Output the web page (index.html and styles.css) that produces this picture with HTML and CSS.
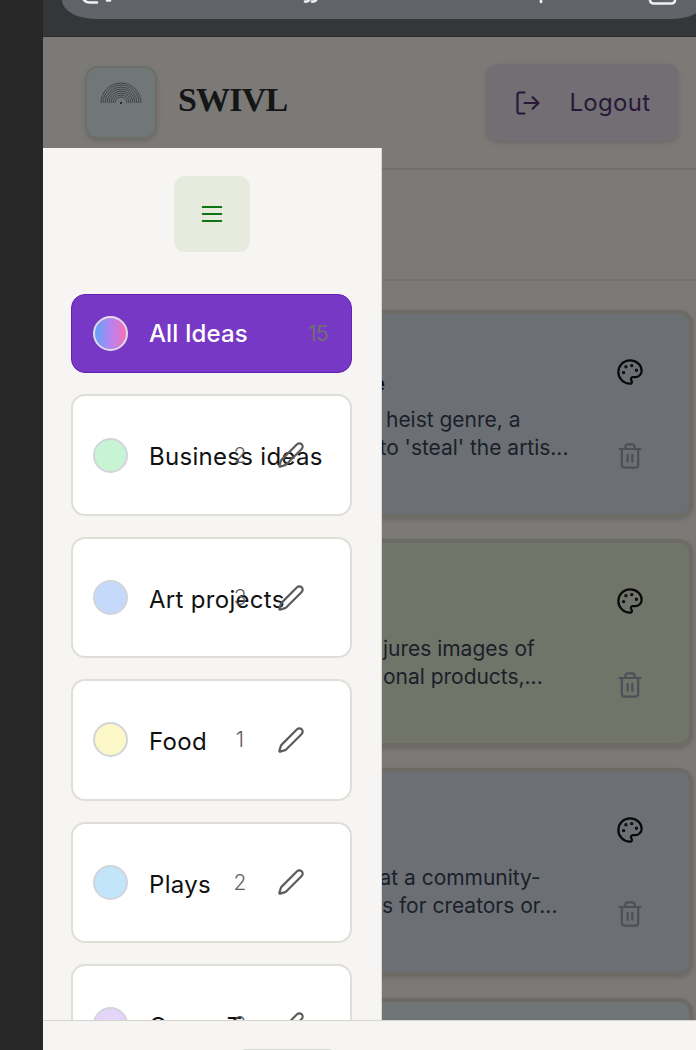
FILE: index.html
```html
<!DOCTYPE html>
<html lang="en">
<head>
<meta charset="utf-8">
<title>SWIVL</title>
<link rel="stylesheet" href="styles.css">
</head>
<body>
<svg class="defs" width="0" height="0">
  <symbol id="pencil" viewBox="0 0 24 24"><path d="M21.174 6.812a1 1 0 0 0-3.986-3.987L3.842 16.174a2 2 0 0 0-.5.83l-1.321 4.352a.5.5 0 0 0 .623.622l4.353-1.32a2 2 0 0 0 .83-.497z"/></symbol>
  <symbol id="palette" viewBox="0 0 24 24"><g fill="currentColor"><circle cx="13.5" cy="6.5" r=".5"/><circle cx="17.5" cy="10.5" r=".5"/><circle cx="8.5" cy="7.5" r=".5"/><circle cx="6.5" cy="12.5" r=".5"/></g><path d="M12 2C6.5 2 2 6.5 2 12s4.5 10 10 10c.926 0 1.648-.746 1.648-1.688 0-.437-.18-.835-.437-1.125-.29-.289-.438-.652-.438-1.125a1.64 1.64 0 0 1 1.668-1.668h1.996c3.051 0 5.555-2.503 5.555-5.554C21.965 6.012 17.461 2 12 2z"/></symbol>
  <symbol id="trash" viewBox="0 0 24 24"><path d="M3 6h18M19 6v14c0 1-1 2-2 2H7c-1 0-2-1-2-2V6M8 6V4c0-1 1-2 2-2h4c1 0 2 1 2 2v2M10 11v6M14 11v6"/></symbol>
</svg>
<div class="screen">
  <div class="bezel"></div>
  <div class="phone">
    <div class="browser">
      <div class="address">
        <svg width="636" height="20" viewBox="62 0 636 20"><path d="M84 0Q86 2.500 90 2.500H97M107 0.500h3M305 1.500q3 .5 4.500-2M312 1.500q3 .5 4.500-2M541 0v2"/><path d="M650 0q0 3.500 4 3.500h17q4 0 4-3.500"/></svg>
      </div>
    </div>
    <div class="app">
      <header class="header">
        <div class="brand">
          <div class="logo">
            <svg width="44" height="24" viewBox="-22 -22 44 24"><path d="M-20 0a20 20 0 0 1 40 0M-18 0a18 18 0 0 1 36 0M-16 0a16 16 0 0 1 32 0M-14 0a14 14 0 0 1 28 0M-12 0a12 12 0 0 1 24 0M-10 0a10 10 0 0 1 20 0M-8 0a8 8 0 0 1 16 0M-6 0a6 6 0 0 1 12 0"/><circle r="1"/></svg>
          </div>
          <span class="wordmark">SWIVL</span>
        </div>
        <div class="logout">
          <svg class="icon" viewBox="0 0 24 24"><path d="M9 21H5a2 2 0 0 1-2-2V5a2 2 0 0 1 2-2h4M16 17l5-5-5-5M21 12H9"/></svg>
          <span>Logout</span>
        </div>
      </header>
      <div class="toolbar"></div>
      <main class="ideas">
        <article class="card slate">
          <div class="copy"><h3>e</h3><p class="in-a">heist genre, a</p><p class="in-b">to 'steal' the artis...</p></div>
          <div class="tools"><svg class="icon"><use href="#palette"/></svg><svg class="icon muted"><use href="#trash"/></svg></div>
        </article>
        <article class="card olive">
          <div class="copy"><h3></h3><p class="in-c">jures images of</p><p class="in-c">onal products,...</p></div>
          <div class="tools"><svg class="icon"><use href="#palette"/></svg><svg class="icon muted"><use href="#trash"/></svg></div>
        </article>
        <article class="card slate">
          <div class="copy"><h3></h3><p class="in-b">at a community-</p><p class="in-d">s for creators or...</p></div>
          <div class="tools"><svg class="icon"><use href="#palette"/></svg><svg class="icon muted"><use href="#trash"/></svg></div>
        </article>
        <article class="card teal"></article>
      </main>
    </div>
    <aside class="drawer">
      <div class="menu"><svg class="icon" viewBox="0 0 24 24"><path d="M4 6h16M4 12h16M4 18h16"/></svg></div>
      <div class="item active"><i class="dot rainbow"></i><span class="name">All Ideas</span><span class="total">15</span></div>
      <div class="item"><i class="dot green"></i><span class="name">Business ideas</span><span class="count">2</span><svg class="icon"><use href="#pencil"/></svg></div>
      <div class="item"><i class="dot blue"></i><span class="name">Art projects</span><span class="count">3</span><svg class="icon"><use href="#pencil"/></svg></div>
      <div class="item"><i class="dot yellow"></i><span class="name">Food</span><span class="count">1</span><svg class="icon"><use href="#pencil"/></svg></div>
      <div class="item"><i class="dot sky"></i><span class="name">Plays</span><span class="count">2</span><svg class="icon"><use href="#pencil"/></svg></div>
      <div class="item"><i class="dot lilac"></i><span class="name wide">Game T</span><span class="count">2</span><svg class="icon"><use href="#pencil"/></svg></div>
    </aside>
    <footer class="bottom"><div class="tab"></div></footer>
  </div>
</div>
</body>
</html>
```
FILE: styles.css
```css
* { box-sizing: border-box; }
body { margin: 0; font-family: Inter, "Liberation Sans", sans-serif; }
h3, p { margin: 0; }
.defs { position: absolute; }
.screen { display: flex; width: 696px; height: 1050px; overflow: hidden; background: #7c7a77; }
.bezel { flex: none; width: 43px; background: #272727; }
.phone { position: relative; flex: none; width: 653px; display: flex; flex-direction: column; overflow: hidden; }

.browser { flex: none; height: 37px; background: #343739; border-bottom: 1px solid #2b2d2e; padding-left: 19px; }
.address { width: 644px; height: 19px; background: #606468; border-radius: 0 0 34px 34px / 0 0 19px 19px; overflow: hidden; }
.address svg { display: block; fill: none; stroke: #eef0f2; stroke-width: 2.6; stroke-linecap: round; }

.app { flex: 1; min-height: 0; overflow: hidden; background: #7c7a77; }
.header { display: flex; justify-content: space-between; height: 133px; padding: 27px 17px 0 42px; border-bottom: 2px solid #73706e; }
.brand { display: flex; gap: 21px; padding-top: 2px; }
.logo { width: 72px; height: 73px; border: 2px solid #6e6d6a; border-radius: 13px; background: #707777; box-shadow: 0 2px 4px #6b6966; padding: 13px 0 0 12px; }
.logo svg { display: block; fill: none; stroke: #33383b; stroke-width: .8; }
.logo circle { fill: #111; stroke: none; }
.wordmark { font: bold 34px/67px "Liberation Serif", serif; letter-spacing: -.8px; color: #141616; }
.logout { display: flex; align-items: center; gap: 28px; width: 193px; height: 77px; padding-left: 27.500px; border-radius: 12px; background: #716e74; box-shadow: 0 2px 4px #6c6a68; color: #291838; font-size: 24px; letter-spacing: .3px; }
.icon { flex: none; width: 28px; height: 28px; fill: none; stroke: currentColor; stroke-width: 2; stroke-linecap: round; stroke-linejoin: round; }
.logout .icon { stroke-width: 1.900; }
.toolbar { height: 111px; border-bottom: 2px solid #73706e; }

.ideas { display: flex; flex-direction: column; gap: 21.200px; padding: 29px 3.500px 0 28px; }
.card { flex: none; display: flex; justify-content: space-between; height: 208px; border: 4px solid #6d6b66; border-radius: 14px; box-shadow: 0 2px 4px #6c6a67; padding: 44px 45px 0 300px; }
.slate { background: #6c7075; }
.olive { background: #707469; }
.teal { background: #707675; }
.copy { color: #1b1f29; font-size: 21px; line-height: 28px; font-weight: 400; letter-spacing: -.02px; white-space: nowrap; }
.copy h3 { height: 48px; padding-top: 11px; color: #0c0d0f; font-size: 22px; line-height: 28px; font-weight: 600; text-indent: -3px; }
.in-a { padding-left: 11px; }
.in-b { padding-left: 4.500px; }
.in-c { padding-left: 8px; }
.in-d { padding-left: 7px; }
.tools { display: flex; flex-direction: column; gap: 55.500px; color: #090909; }
.tools .icon { stroke-width: 1.900; }
.tools .muted { color: #4c5057; }

.drawer { position: absolute; left: 0; top: 147.500px; width: 339px; height: 872.500px; display: flex; flex-direction: column; gap: 21.200px; padding: 28px 29px 0 28px; background: #f6f5f4; border-right: 1px solid #d9d8d2; overflow: hidden; }
.menu { flex: none; display: flex; align-items: center; justify-content: center; align-self: center; width: 76px; height: 76.500px; margin-bottom: 20.500px; border-radius: 11px; background: #e7ebdd; color: #107510; }
.menu .icon { stroke-width: 1.600; }
.item { flex: none; display: flex; align-items: center; width: 281px; height: 121.300px; padding: 0 19px; border: 2px solid #e0ded9; border-radius: 14px; background: #fff; color: #111; }
.item.active { height: 79.500px; background: #7738c5; border: 1px solid #6520b6; padding: 0 20px; color: #fff; }
.dot { flex: none; width: 35px; height: 35px; margin-left: 1px; border: 2px solid #d1d5db; border-radius: 50%; }
.rainbow { border: 2px solid #e0dbe9; background: linear-gradient(90deg, #60a5fa, #b981ee 52%, #f472b6 100%); }
.green { background: #c7f5d4; }
.blue { background: #c5dafb; }
.yellow { background: #fcf7c7; }
.sky { background: #c2e5fa; }
.lilac { background: #e6d5fb; }
.name { flex: none; width: 82px; margin-left: 21px; padding-top: 4.500px; font-size: 24px; line-height: 32px; letter-spacing: .3px; white-space: nowrap; }
.wide { word-spacing: 3px; }
.active .name { width: auto; padding-top: 1px; font-weight: 500; letter-spacing: .1px; }
.total { margin-left: auto; padding-right: 3px; color: #6f6f72; font-size: 21px; letter-spacing: -.7px; }
.count { width: 18px; text-align: center; color: #606060; font-size: 21px; font-weight: 350; }
.item .icon { margin-left: 28px; color: #5c5c5c; stroke-width: 1.900; }

.bottom { flex: none; position: relative; height: 30px; border-top: 1px solid #d5d4cd; background: #f6f5f4; padding: 28px 0 0 197px; }
.tab { width: 95px; height: 12px; border-radius: 10px; background: #d8d8d5; }
```
